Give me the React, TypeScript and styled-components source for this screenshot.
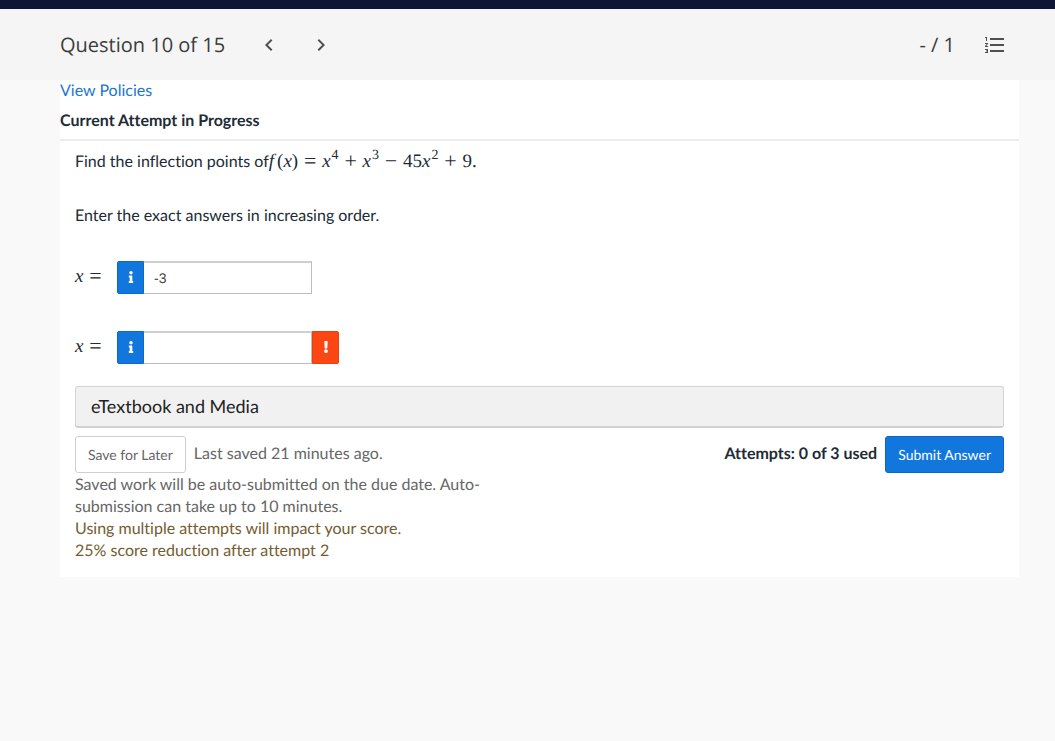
import React from "react";
import styled, { createGlobalStyle } from "styled-components";
import { MdChevronLeft, MdChevronRight, MdFormatListNumbered } from "react-icons/md";
import { FaInfo, FaExclamation } from "react-icons/fa";

const GlobalStyle = createGlobalStyle`
  *, *::before, *::after { box-sizing: border-box; }
  body {
    margin: 0;
    background: #f9f9f9;
    color: #212b36;
    font-family: Lato, "Liberation Sans", sans-serif;
    font-size: 16px;
    line-height: 22px;
    font-variant-ligatures: none;
    text-rendering: geometricPrecision;
  }
  button, input {
    font-family: inherit;
    font-variant-ligatures: inherit;
    text-rendering: inherit;
  }
  p, h1, h2 { margin: 0; }
`;

const TopBar = styled.div`
  height: 9px;
  background: #0f1535;
`;

const Header = styled.header`
  display: flex;
  align-items: center;
  justify-content: space-between;
  height: 71px;
  padding: 0 48px 0 60px;
  background: #f5f5f5;
  color: #3c3c3c;
  font-family: "Open Sans", "Noto Sans", sans-serif;
  font-size: 20px;
`;

const HeaderGroup = styled.div<{ $gap: number }>`
  display: flex;
  align-items: center;
  gap: ${(p) => p.$gap}px;
`;

const Title = styled.h1`
  font-size: 20px;
  font-weight: 400;
`;

const Pager = styled.nav`
  display: flex;
  gap: 28px;
`;

const IconButton = styled.button`
  display: flex;
  padding: 0;
  border: 0;
  background: none;
  color: #505050;
  font-size: 24px;
  cursor: pointer;
`;

const Panel = styled.main`
  margin: 0 36px 0 60px;
  padding-bottom: 15px;
  background: #fff;
`;

const PanelHead = styled.div`
  display: flex;
  flex-direction: column;
  align-items: flex-start;
  gap: 8px;
  padding-bottom: 7px;
  border-bottom: 2px solid #ececec;
`;

const PolicyLink = styled.a`
  color: #1976d2;
  text-decoration: none;
`;

const Status = styled.h2`
  font-size: 16px;
  font-weight: 700;
`;

const Body = styled.div`
  padding: 9px 15px 0;
`;

const Prompt = styled.p`
  margin-bottom: 32px;
`;

const Formula = styled.span`
  font-family: "Liberation Serif", serif;
  font-size: 19px;
  line-height: 22px;
  white-space: nowrap;

  sup {
    margin-left: 1px;
    font-size: 14px;
    line-height: 0;
    vertical-align: 8px;
  }
`;

const FunctionName = styled.i`
  margin-right: 3px;
`;

const Op = styled.span`
  display: inline-block;
  width: 24px;
  font-size: 22px;
  line-height: 22px;
  text-align: center;
  vertical-align: -1px;
`;

const Answers = styled.div`
  display: flex;
  flex-direction: column;
  gap: 37px;
  margin: 34px 0 22px;
`;

const Answer = styled.div`
  display: flex;
  align-items: center;
  height: 33px;
`;

const AnswerLabel = styled.label`
  width: 42px;
  padding-bottom: 2px;
`;

const AddOn = styled.button<{ $tone: "info" | "error" }>`
  display: flex;
  align-items: center;
  justify-content: center;
  width: 27px;
  height: 33px;
  padding: 0 0 1px;
  border: 1px solid ${(p) => (p.$tone === "info" ? "#0c6ac8" : "#e8400f")};
  border-radius: ${(p) => (p.$tone === "info" ? "2px 0 0 2px" : "0 2px 2px 0")};
  background: ${(p) => (p.$tone === "info" ? "#1277dc" : "#fc4614")};
  color: #fff;
  font-size: 12px;
`;

const AnswerInput = styled.input`
  width: 168px;
  height: 33px;
  padding: 0 10px;
  border: 1px solid #bdbdbd;
  border-left: 0;
  border-top: 2px solid #cfcfcf;
  border-radius: 0;
  background: #fff;
  color: #444;
  font-family: "Liberation Sans", Arial, sans-serif;
  font-size: 14px;
`;

const MediaButton = styled.button`
  display: block;
  width: 100%;
  height: 42px;
  margin-bottom: 8px;
  padding: 0 15px 1px;
  border: 1px solid #d4d4d4;
  border-bottom: 2px solid #d0d0d0;
  border-radius: 3px;
  background: #f1f1f1;
  color: #222;
  font-size: 18px;
  text-align: left;
`;

const Actions = styled.div`
  display: flex;
  justify-content: space-between;
  margin-bottom: 1px;
`;

const ActionGroup = styled.div`
  display: flex;
  gap: 8px;
`;

const ActionText = styled.span<{ $strong?: boolean }>`
  padding-top: 7px;
  color: ${(p) => (p.$strong ? "#212b36" : "#666")};
  font-weight: ${(p) => (p.$strong ? 700 : 400)};
`;

const ActionButton = styled.button<{ $primary?: boolean }>`
  height: 37px;
  padding: 0 12px;
  border: 1px solid ${(p) => (p.$primary ? "#0c66c0" : "#cfcfcf")};
  border-radius: 3px;
  background: ${(p) => (p.$primary ? "#1277dc" : "#fff")};
  color: ${(p) => (p.$primary ? "#fff" : "#666")};
  font-size: 14px;
`;

const Note = styled.p<{ $warning?: boolean }>`
  max-width: 410px;
  color: ${(p) => (p.$warning ? "#745c30" : "#666")};
`;

function AnswerRow({ id, value, error }: { id: string; value: string; error?: boolean }) {
  return (
    <Answer>
      <AnswerLabel htmlFor={id}>
        <Formula>
          <i>x</i>
          <Op>=</Op>
        </Formula>
      </AnswerLabel>
      <AddOn $tone="info" type="button" aria-label="Answer information">
        <FaInfo />
      </AddOn>
      <AnswerInput id={id} type="text" defaultValue={value} />
      {error && (
        <AddOn $tone="error" type="button" aria-label="Answer missing">
          <FaExclamation />
        </AddOn>
      )}
    </Answer>
  );
}

export default function App() {
  return (
    <>
      <GlobalStyle />
      <TopBar />
      <Header>
        <HeaderGroup $gap={32}>
          <Title>Question 10 of 15</Title>
          <Pager aria-label="Questions">
            <IconButton type="button" aria-label="Previous question">
              <MdChevronLeft />
            </IconButton>
            <IconButton type="button" aria-label="Next question">
              <MdChevronRight />
            </IconButton>
          </Pager>
        </HeaderGroup>
        <HeaderGroup $gap={28}>
          <span>- / 1</span>
          <IconButton type="button" aria-label="Question list">
            <MdFormatListNumbered />
          </IconButton>
        </HeaderGroup>
      </Header>
      <Panel>
        <PanelHead>
          <PolicyLink href="#policies">View Policies</PolicyLink>
          <Status>Current Attempt in Progress</Status>
        </PanelHead>
        <Body>
          <Prompt>
            Find the inflection points of
            <Formula>
              <FunctionName>f</FunctionName>(<i>x</i>)<Op>=</Op>
              <i>x</i>
              <sup>4</sup>
              <Op>+</Op>
              <i>x</i>
              <sup>3</sup>
              <Op>−</Op>45<i>x</i>
              <sup>2</sup>
              <Op>+</Op>9.
            </Formula>
          </Prompt>
          <p>Enter the exact answers in increasing order.</p>
          <Answers>
            <AnswerRow id="answer-1" value="-3" />
            <AnswerRow id="answer-2" value="" error />
          </Answers>
          <MediaButton type="button">eTextbook and Media</MediaButton>
          <Actions>
            <ActionGroup>
              <ActionButton type="button">Save for Later</ActionButton>
              <ActionText>Last saved 21 minutes ago.</ActionText>
            </ActionGroup>
            <ActionGroup>
              <ActionText $strong>Attempts: 0 of 3 used</ActionText>
              <ActionButton type="button" $primary>
                Submit Answer
              </ActionButton>
            </ActionGroup>
          </Actions>
          <Note>
            Saved work will be auto-submitted on the due date. Auto-submission can take up to 10
            minutes.
          </Note>
          <Note $warning>Using multiple attempts will impact your score.</Note>
          <Note $warning>25% score reduction after attempt 2</Note>
        </Body>
      </Panel>
    </>
  );
}
